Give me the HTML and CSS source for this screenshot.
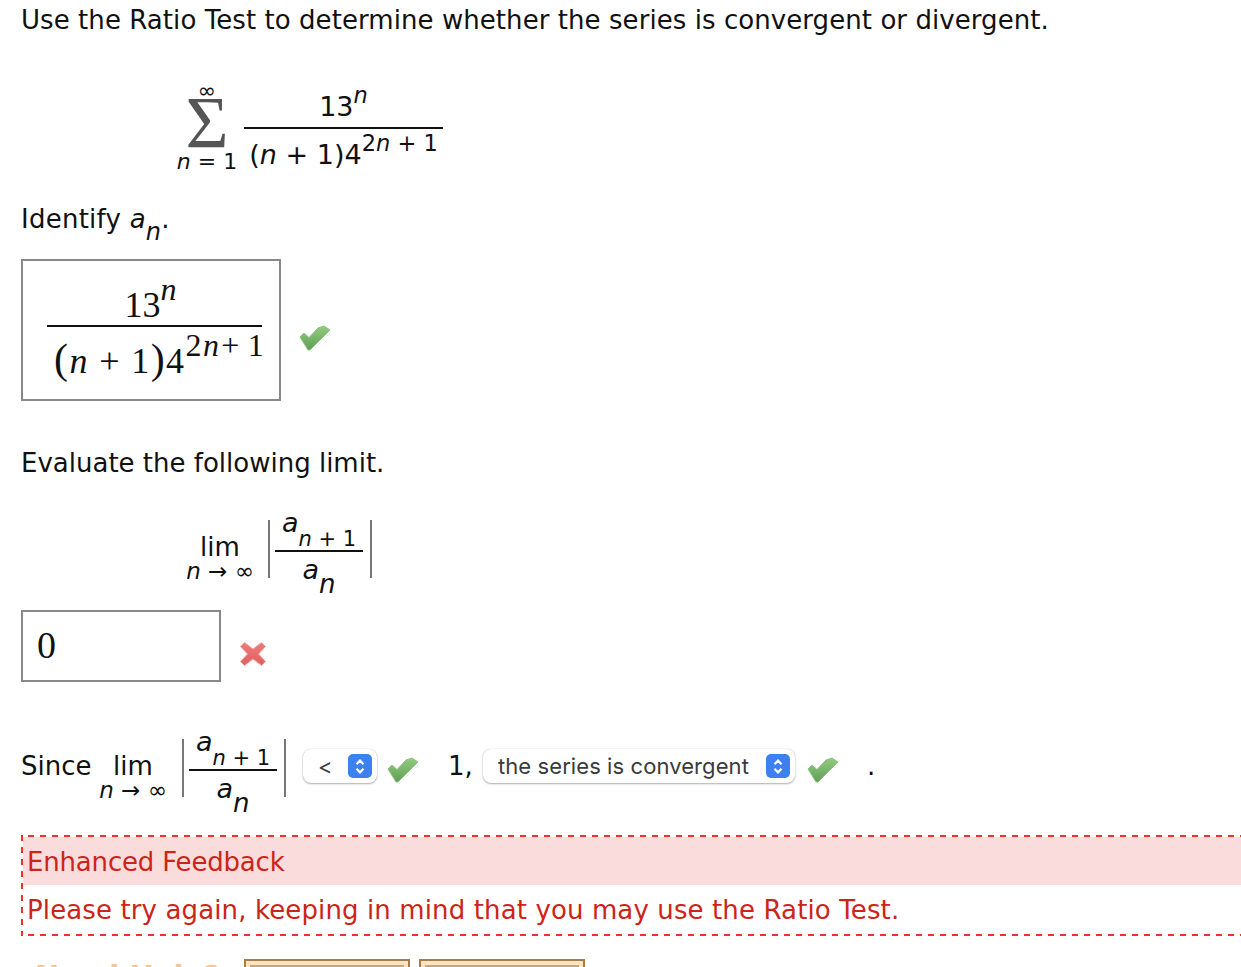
FILE: index.html
```html
<!DOCTYPE html>
<html lang="en">
<head>
<meta charset="utf-8">
<title>Ratio Test</title>
<link rel="stylesheet" href="styles.css">
</head>
<body>
<svg class="defs" width="0" height="0" aria-hidden="true">
  <defs>
    <linearGradient id="green" x1="0" y1="0" x2="0" y2="1">
      <stop offset="0" stop-color="#93cc80"/>
      <stop offset="1" stop-color="#5f9f58"/>
    </linearGradient>
    <linearGradient id="red" x1="0" y1="0" x2="0" y2="1">
      <stop offset="0" stop-color="#ee7b7b"/>
      <stop offset="1" stop-color="#e25f5f"/>
    </linearGradient>
    <symbol id="tick" viewBox="0 0 32 26">
      <path d="M1 12 L5 8 L10 12.5 L19 3 L25 1 L31 5 L11 25 L9 25 Z"/>
    </symbol>
  </defs>
</svg>
<main class="page">
  <p class="line intro">Use the Ratio Test to determine whether the series is convergent or divergent.</p>

  <div class="sum-row">
    <div class="sigma">
      <span class="limit-inf">∞</span>
      <span class="sigma-glyph">Σ</span>
      <span class="limit-small"><i>n</i> = 1</span>
    </div>
    <div class="frac frac-sum">
      <div class="num">13<sup class="up"><i>n</i></sup></div>
      <div class="den">(<i>n</i> + 1)4<sup class="up">2<i>n</i> + 1</sup></div>
    </div>
  </div>

  <p class="line identify">Identify <i>a</i><sub class="down"><i>n</i></sub>.</p>

  <div class="answer-row first-answer">
    <div class="answer-box tall">
      <div class="frac frac-serif">
        <div class="num">13<sup class="up"><i>n</i></sup></div>
        <div class="den"><span class="paren">(</span><i>n</i> + 1<span class="paren">)</span>4<sup class="up">2<i>n</i><span class="plus">+</span>1</sup></div>
      </div>
    </div>
    <svg class="check check-a"><use href="#tick"/></svg>
  </div>

  <p class="line evaluate">Evaluate the following limit.</p>

  <div class="limit-row limit-main">
    <div class="lim">
      <span>lim</span>
      <span class="lim-under"><i>n</i> → ∞</span>
    </div>
    <div class="abs">
      <div class="frac frac-ratio">
        <div class="num"><i>a</i><sub class="ratio-sub"><i>n</i> + 1</sub></div>
        <div class="den"><i>a</i><sub class="ratio-sub2"><i>n</i></sub></div>
      </div>
    </div>
  </div>

  <div class="answer-row">
    <div class="answer-box short">0</div>
    <svg class="cross" viewBox="0 0 28 26"><path d="M5.5 1.5 L14 8 L22.5 1.5 L26.5 5.5 L19.5 13 L26.5 20.5 L22.5 24.5 L14 18 L5.5 24.5 L1.5 20.5 L8.5 13 L1.5 5.5 Z"/></svg>
  </div>

  <div class="since-row">
    <span class="since">Since</span>
    <div class="limit-row">
      <div class="lim">
        <span>lim</span>
        <span class="lim-under"><i>n</i> → ∞</span>
      </div>
      <div class="abs">
        <div class="frac frac-ratio">
          <div class="num"><i>a</i><sub class="ratio-sub"><i>n</i> + 1</sub></div>
          <div class="den"><i>a</i><sub class="ratio-sub2"><i>n</i></sub></div>
        </div>
      </div>
    </div>
    <div class="select select-op"><span>&lt;</span>
      <span class="stepper"><svg viewBox="0 0 12 18"><path d="M3 7 L6 4 L9 7 M3 11 L6 14 L9 11"/></svg></span>
    </div>
    <svg class="check check-b"><use href="#tick"/></svg>
    <span class="one">1,</span>
    <div class="select select-series"><span>the series is convergent</span>
      <span class="stepper"><svg viewBox="0 0 12 18"><path d="M3 7 L6 4 L9 7 M3 11 L6 14 L9 11"/></svg></span>
    </div>
    <svg class="check check-c"><use href="#tick"/></svg>
    <span class="dot">.</span>
  </div>

  <section class="feedback">
    <h2 class="fb-head">Enhanced Feedback</h2>
    <p class="fb-body">Please try again, keeping in mind that you may use the Ratio Test.</p>
  </section>

  <div class="help-row">
    <span class="help">Need Help?</span>
    <span class="btn"></span>
    <span class="btn"></span>
  </div>
</main>
</body>
</html>
```
FILE: styles.css
```css
html, body { margin: 0; padding: 0; background: #fff; }
body { height: 967px; overflow: hidden; }
.defs { position: absolute; }
.page { font: 26px/32px "DejaVu Sans", Verdana, sans-serif; color: #111; padding-left: 21px; }
p, h2 { margin: 0; font: inherit; }
.line { height: 32px; white-space: nowrap; }
.intro { margin-top: 4px; letter-spacing: .065px; }

.sum-row { display: flex; margin: 45px 0 0 155px; height: 94px; align-items: flex-start; }
.sigma { width: 62px; display: flex; flex-direction: column; align-items: center; margin-right: 6px; margin-top: 3px; }
.limit-inf { font-size: 22px; line-height: 14px; height: 14px; }
.limit-small { font-size: 22px; line-height: 22px; white-space: nowrap; margin-top: 3px; }
.sigma-glyph { font: 74px/50px "Liberation Serif", serif; color: #555; height: 50px; }

.frac { display: inline-flex; flex-direction: column; align-items: stretch; text-align: center; white-space: nowrap; }
.frac-sum { width: 199px; font-size: 27px; }
.frac-sum .num { height: 46px; line-height: 52px; border-bottom: 2px solid #111; }
.frac-sum .den { line-height: 52px; height: 44px; }
.up { font-size: 22.5px; line-height: 0; vertical-align: 13px; }
.num, .den { display: block; flex: none; }

.identify { margin-top: 28px; letter-spacing: .25px; }
.down { font-size: 24px; line-height: 0; vertical-align: -12px; }

.answer-row { display: flex; }
.first-answer { margin-top: 24px; }
.answer-box { border: 2px solid #888; box-sizing: border-box; display: flex; }
.tall { width: 260px; height: 142px; padding: 21px 0 0 24px; }
.short { width: 200px; height: 72px; font: 38px/66px "Liberation Serif", serif; padding-left: 14px; }
.frac-serif { font: 36px "Liberation Serif", serif; width: 215px; }
.frac-serif .num { height: 43px; line-height: 46px; border-bottom: 2px solid #111; padding-right: 8px; }
.frac-serif .den { line-height: 64px; text-align: left; padding-left: 7px; letter-spacing: 1.4px; }
.frac-serif .up { font-size: 32px; vertical-align: 17px; }
.plus { margin: 0 7px 0 1px; }
.paren { font-size: 42px; }

.check { width: 32px; height: 26px; fill: url(#green); stroke: #8fc47f; stroke-width: 1; stroke-linejoin: round; flex: none; }
.check-a { margin: 66px 0 0 18px; }

.evaluate { margin-top: 46px; }

.limit-row { display: flex; align-items: flex-start; }
.limit-main { margin: 32px 0 0 163px; height: 99px; }
.lim { display: flex; flex-direction: column; align-items: center; width: 72px; margin-top: 22.5px; font-size: 26px; line-height: 27px; }
.lim-under { font-size: 23px; line-height: 20px; white-space: nowrap; }
.abs { display: flex; align-items: flex-start; border-left: 2px solid #777; border-right: 2px solid #777; height: 58px; margin: 9px 0 0 12px; padding: 0 7px 0 5px; }
.frac-ratio { font-size: 27px; width: 88px; margin-top: -13px; }
.frac-ratio .num { height: 43px; line-height: 32px; border-bottom: 2px solid #111; }
.frac-ratio .den { line-height: 36px; }
.ratio-sub { font-size: 21px; line-height: 0; vertical-align: -14px; }
.ratio-sub2 { font-size: 26px; line-height: 0; vertical-align: -14px; }

.cross { width: 28px; height: 26px; fill: url(#red); stroke: #f0a2a2; stroke-width: 1; stroke-linejoin: round; margin: 31px 0 0 18px; flex: none; }

.since-row { display: flex; align-items: flex-start; margin-top: 55px; height: 98px; white-space: nowrap; }
.since { width: 76px; margin-top: 13px; }
.since-row .lim { margin-top: 15.5px; }
.since-row .abs { margin: 2px 0 0 13px; }
.select { display: flex; align-items: center; justify-content: space-between; box-sizing: border-box; height: 34px; background: #fff; border-radius: 8px; box-shadow: 0 1px 2px rgba(0,0,0,.3), 0 0 1px rgba(0,0,0,.25); font: 22px/36px Inter, "Liberation Sans", Arial, sans-serif; letter-spacing: .08px; color: #3a3a3a; padding: 0 5px 0 15px; }
.select-op { width: 74px; margin: 12px 0 0 17px; }
.select-series { width: 312px; margin: 12px 0 0 0; }
.stepper { width: 24px; height: 24px; border-radius: 5px; background: #3d80f0; display: flex; align-items: center; justify-content: center; }
.stepper svg { width: 14px; height: 21px; fill: none; stroke: #fff; stroke-width: 1.9; }
.check-b { margin: 20px 0 0 10px; }
.check-c { margin: 20px 0 0 12px; }
.one { margin: 13px 0 0 29px; width: 35px; }
.dot { margin: 13px 0 0 28px; }

.feedback { height: 97px; width: 1220px; padding: 2px 0 2px 2px; color: #cc2418;
  background:
    repeating-linear-gradient(90deg, #f0322a 0 1px, transparent 1px 7px, #f0322a 7px 12px) top left / 100% 2px no-repeat,
    repeating-linear-gradient(90deg, #f0322a 0 1px, transparent 1px 7px, #f0322a 7px 12px) bottom left / 100% 2px no-repeat,
    repeating-linear-gradient(180deg, #f0322a 0 6px, transparent 6px 12px) top left / 2px 100% no-repeat;
}
.fb-head { background: #fadcdc; height: 48px; line-height: 50px; padding-left: 4px; letter-spacing: -.18px; }
.fb-body { height: 49px; line-height: 51px; padding-left: 4px; letter-spacing: .12px; }

.help-row { display: flex; align-items: flex-start; margin-top: 23px; height: 8px; overflow: hidden; }
.help { width: 223px; padding-left: 14px; box-sizing: border-box; color: #f6c48e; font-size: 29px; font-weight: bold; margin-top: 1px; white-space: nowrap; flex: none; }
.btn { width: 166px; height: 40px; box-sizing: border-box; margin-right: 9px; border: 2px solid #a87c46; background: #c2a680; box-shadow: inset 0 0 0 4px #fbe3c3; flex: none; }
```
